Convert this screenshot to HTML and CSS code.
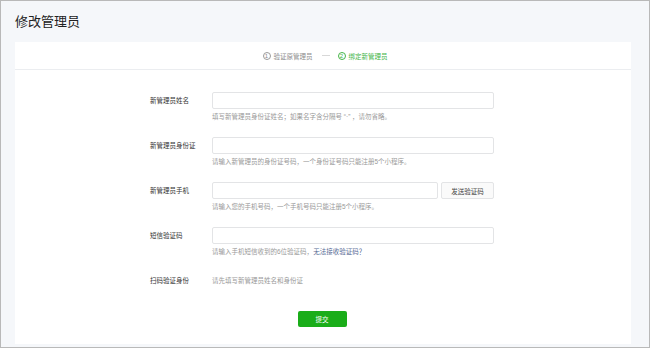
FILE: index.html
```html
<!DOCTYPE html>
<html lang="zh-CN">
<head>
	<meta charset="UTF-8">
	<title>修改管理员</title>
	<link rel="stylesheet" href="styles.css">
</head>
<body>
	<div class="page">
		<h1 class="title">修改管理员</h1>
		<div class="card">
			<div class="steps">
				<span class="step"><i class="num">1</i>验证原管理员</span>
				<span class="dash"></span>
				<span class="step on"><i class="num">2</i>绑定新管理员</span>
			</div>
			<div class="form">
				<div class="row">
					<label class="lab">新管理员姓名</label>
					<div class="ctl">
						<input class="ipt" type="text">
						<p class="tip">填写新管理员身份证姓名；如果名字含分隔号 “·” ，请勿省略。</p>
					</div>
				</div>
				<div class="row">
					<label class="lab">新管理员身份证</label>
					<div class="ctl">
						<input class="ipt" type="text">
						<p class="tip">请输入新管理员的身份证号码，一个身份证号码只能注册5个小程序。</p>
					</div>
				</div>
				<div class="row">
					<label class="lab">新管理员手机</label>
					<div class="ctl">
						<div class="line">
							<input class="ipt" type="text">
							<button class="btn">发送验证码</button>
						</div>
						<p class="tip">请输入您的手机号码，一个手机号码只能注册5个小程序。</p>
					</div>
				</div>
				<div class="row">
					<label class="lab">短信验证码</label>
					<div class="ctl">
						<input class="ipt" type="text">
						<p class="tip">请输入手机短信收到的6位验证码，<a class="link">无法接收验证码？</a></p>
					</div>
				</div>
				<div class="row last">
					<label class="lab">扫码验证身份</label>
					<div class="ctl">
						<p class="tip">请先填写新管理员姓名和身份证</p>
					</div>
				</div>
				<div class="foot">
					<button class="submit">提交</button>
				</div>
			</div>
		</div>
	</div>
</body>
</html>
```

FILE: styles.css
```css
*{
	margin: 0;
	padding: 0;
	box-sizing: border-box;
}
body{
	width: 650px;
	height: 350px;
	font-family: "Liberation Sans", "Noto Sans CJK SC", sans-serif;
	background: #fff;
}
.page{
	width: 650px;
	height: 348px;
	border: 1px solid #b9b9b9;
	background: #f5f7fa;
	padding: 0 18px 0 14px;
}
.title{
	font-size: 13px;
	font-weight: normal;
	color: #222;
	height: 41px;
	line-height: 42px;
}
.card{
	background: #fff;
	height: 302px;
}
.steps{
	height: 28px;
	border-bottom: 1px solid #ebedf0;
	display: flex;
	justify-content: center;
	align-items: center;
	font-size: 6.5px;
	color: #8d8d8d;
	padding-left: 4px;
}
.step{
	display: flex;
	align-items: center;
}
.num{
	font-style: normal;
	width: 8px;
	height: 8px;
	border: 1px solid #9a9a9a;
	border-radius: 50%;
	font-size: 6px;
	line-height: 6px;
	text-align: center;
	margin-right: 3px;
}
.dash{
	width: 8px;
	border-top: 1px solid #d8d8d8;
	margin: 0 8px 0 9px;
}
.step.on{
	color: #44b549;
}
.step.on .num{
	border-color: #44b549;
}
.form{
	padding-top: 22px;
	padding-left: 135px;
}
.row{
	display: flex;
	height: 45px;
}
.lab{
	width: 62px;
	font-size: 6.5px;
	color: #333;
	line-height: 17px;
}
.ctl{
	width: 282px;
}
.ipt{
	display: block;
	width: 282px;
	height: 17px;
	border: 1px solid #e3e4e6;
	border-radius: 2px;
	outline: none;
}
.line{
	display: flex;
}
.line .ipt{
	width: 226px;
}
.btn{
	width: 53px;
	height: 17px;
	margin-left: 3px;
	border: 1px solid #e3e4e6;
	border-radius: 2px;
	background: #fafafa;
	font-family: inherit;
	font-size: 6.5px;
	color: #444;
}
.tip{
	font-size: 6.5px;
	color: #999;
	margin-top: 3px;
	line-height: 10px;
}
.link{
	color: #576b95;
}
.row.last .tip{
	margin-top: 0;
	line-height: 17px;
}
.row.last{
	height: 39px;
}
.foot{
	width: 282px;
	margin-left: 31px;
	display: flex;
	justify-content: center;
}
.submit{
	width: 49px;
	height: 16px;
	border: 0;
	border-radius: 2px;
	background: #1aad19;
	color: #fff;
	font-family: inherit;
	font-size: 6.5px;
}
```
